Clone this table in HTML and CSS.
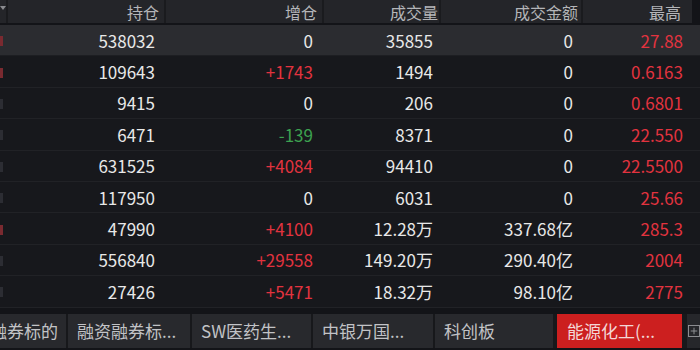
FILE: index.html
```html
<!DOCTYPE html>
<html lang="zh">
<head>
<meta charset="utf-8">
<link rel="stylesheet" href="styles.css">
</head>
<body>
<div class="screen">
  <div class="table">
    <div class="row head">
      <div class="cell stub"><i class="tick"></i></div>
      <div class="cell">持仓</div>
      <div class="cell">增仓</div>
      <div class="cell">成交量</div>
      <div class="cell">成交金额</div>
      <div class="cell last">最高</div>
    </div>
    <div class="row sel">
      <div class="cell stub"><i class="mark up"></i></div>
      <div class="cell">538032</div>
      <div class="cell">0</div>
      <div class="cell">35855</div>
      <div class="cell">0</div>
      <div class="cell last up">27.88</div>
    </div>
    <div class="row">
      <div class="cell stub"><i class="mark up"></i></div>
      <div class="cell">109643</div>
      <div class="cell up">+1743</div>
      <div class="cell">1494</div>
      <div class="cell">0</div>
      <div class="cell last up">0.6163</div>
    </div>
    <div class="row">
      <div class="cell stub"><i class="mark dim"></i></div>
      <div class="cell">9415</div>
      <div class="cell">0</div>
      <div class="cell">206</div>
      <div class="cell">0</div>
      <div class="cell last up">0.6801</div>
    </div>
    <div class="row">
      <div class="cell stub"><i class="mark dim"></i></div>
      <div class="cell">6471</div>
      <div class="cell down">-139</div>
      <div class="cell">8371</div>
      <div class="cell">0</div>
      <div class="cell last up">22.550</div>
    </div>
    <div class="row">
      <div class="cell stub"><i class="mark dim"></i></div>
      <div class="cell">631525</div>
      <div class="cell up">+4084</div>
      <div class="cell">94410</div>
      <div class="cell">0</div>
      <div class="cell last up">22.5500</div>
    </div>
    <div class="row">
      <div class="cell stub"><i class="mark dim"></i></div>
      <div class="cell">117950</div>
      <div class="cell">0</div>
      <div class="cell">6031</div>
      <div class="cell">0</div>
      <div class="cell last up">25.66</div>
    </div>
    <div class="row">
      <div class="cell stub"><i class="mark up"></i></div>
      <div class="cell">47990</div>
      <div class="cell up">+4100</div>
      <div class="cell">12.28万</div>
      <div class="cell">337.68亿</div>
      <div class="cell last up">285.3</div>
    </div>
    <div class="row">
      <div class="cell stub"><i class="mark dim"></i></div>
      <div class="cell">556840</div>
      <div class="cell up">+29558</div>
      <div class="cell">149.20万</div>
      <div class="cell">290.40亿</div>
      <div class="cell last up">2004</div>
    </div>
    <div class="row">
      <div class="cell stub"><i class="mark dim"></i></div>
      <div class="cell">27426</div>
      <div class="cell up">+5471</div>
      <div class="cell">18.32万</div>
      <div class="cell">98.10亿</div>
      <div class="cell last up">2775</div>
    </div>
  </div>
  <div class="tabs">
    <div class="tab first"><span>融资融券标的</span></div>
    <div class="tab w2">融资融券标...</div>
    <div class="tab w3">SW医药生...</div>
    <div class="tab w4">中银万国...</div>
    <div class="tab w5">科创板</div>
    <div class="tab active">能源化工(...</div>
    <div class="tab icon">
      <svg width="22" height="22" viewBox="0 0 22 22">
        <rect x="1" y="1" width="20" height="20" fill="none" stroke="#9a9b9f" stroke-width="1.6"/>
        <line x1="11" y1="5" x2="11" y2="17" stroke="#9a9b9f" stroke-width="1.6"/>
        <line x1="5" y1="11" x2="17" y2="11" stroke="#9a9b9f" stroke-width="1.6"/>
      </svg>
    </div>
  </div>
</div>
</body>
</html>
```

FILE: styles.css
```css
* { box-sizing: border-box; }
html, body {
  margin: 0;
  padding: 0;
  background: #131418;
}
body {
  width: 700px;
  height: 350px;
  overflow: hidden;
  font-family: "Noto Sans CJK SC", "Noto Sans", sans-serif;
  color: #e8e8e8;
}
.screen {
  width: 700px;
  height: 350px;
  display: flex;
  flex-direction: column;
}
.table {
  display: flex;
  flex-direction: column;
}
.row {
  display: grid;
  grid-template-columns: 8px 158px 158px 117px 142px 117px;
  height: 31.4px;
  background: #17181c;
  border-bottom: 1px solid #212226;
  font-size: 17px;
  line-height: 1;
}
.row .cell {
  display: flex;
  align-items: center;
  justify-content: flex-end;
  padding-right: 11px;
  white-space: nowrap;
  overflow: hidden;
}
.row .cell:nth-child(4) { padding-right: 8px; }
.row .cell:nth-child(5) { padding-right: 10px; }
.row .cell.last { padding-right: 17px; }
.row .cell.stub {
  padding-right: 0;
  justify-content: flex-start;
}
.mark {
  display: block;
  width: 3px;
  height: 10px;
  margin-top: 2px;
}
.mark.up { background: #7a2a30; }
.mark.dim { background: #2c2d33; }
.tick {
  display: block;
  width: 0;
  height: 0;
  margin-top: 6px;
  border-left: 3px solid transparent;
  border-right: 3px solid transparent;
  border-top: 4px solid #8a8b8f;
}
.row.head {
  height: 25px;
  background: #131418;
  border-bottom: 2px solid #131418;
  font-size: 16px;
  color: #b4b5b8;
}
.row.head .cell {
  background: #242529;
  border-right: 2px solid #1a1b1e;
  padding-right: 5px;
}
.row.head .cell:nth-child(4) { padding-right: 1px; }
.row.head .cell:nth-child(5) { padding-right: 3px; }
.row.head .cell.last { padding-right: 11px; border-right: 8px solid #131418; }
.row.head .cell.stub {
  padding-right: 0;
  align-items: flex-start;
}
.row.sel {
  background: #2b2c30;
  border-bottom-color: #1d1e22;
}
.up { color: #e2333f; }
.down { color: #3da150; }

.tabs {
  margin-top: 6px;
  height: 34px;
  display: flex;
  background: #17181b;
  gap: 2px;
  font-size: 17px;
  color: #c2c3c6;
}
.tab {
  background: #28292d;
  display: flex;
  align-items: center;
  padding-left: 9px;
  white-space: nowrap;
  overflow: hidden;
  flex-shrink: 0;
}
.tab.first {
  width: 66px;
  padding-left: 0;
  padding-right: 8px;
  justify-content: flex-end;
}
.tab.first span { flex-shrink: 0; }
.tab.w2 { width: 122px; }
.tab.w3 { width: 119px; }
.tab.w4 { width: 120px; }
.tab.w5 { width: 118px; margin-right: 2px; }
.tab.active {
  width: 125px;
  background: #cc1f1f;
  color: #f3d6d6;
  padding-left: 10px;
}
.tab.icon {
  margin-left: 3px;
  flex: 1;
  padding-left: 1px;
  background: #26272b;
}
```
